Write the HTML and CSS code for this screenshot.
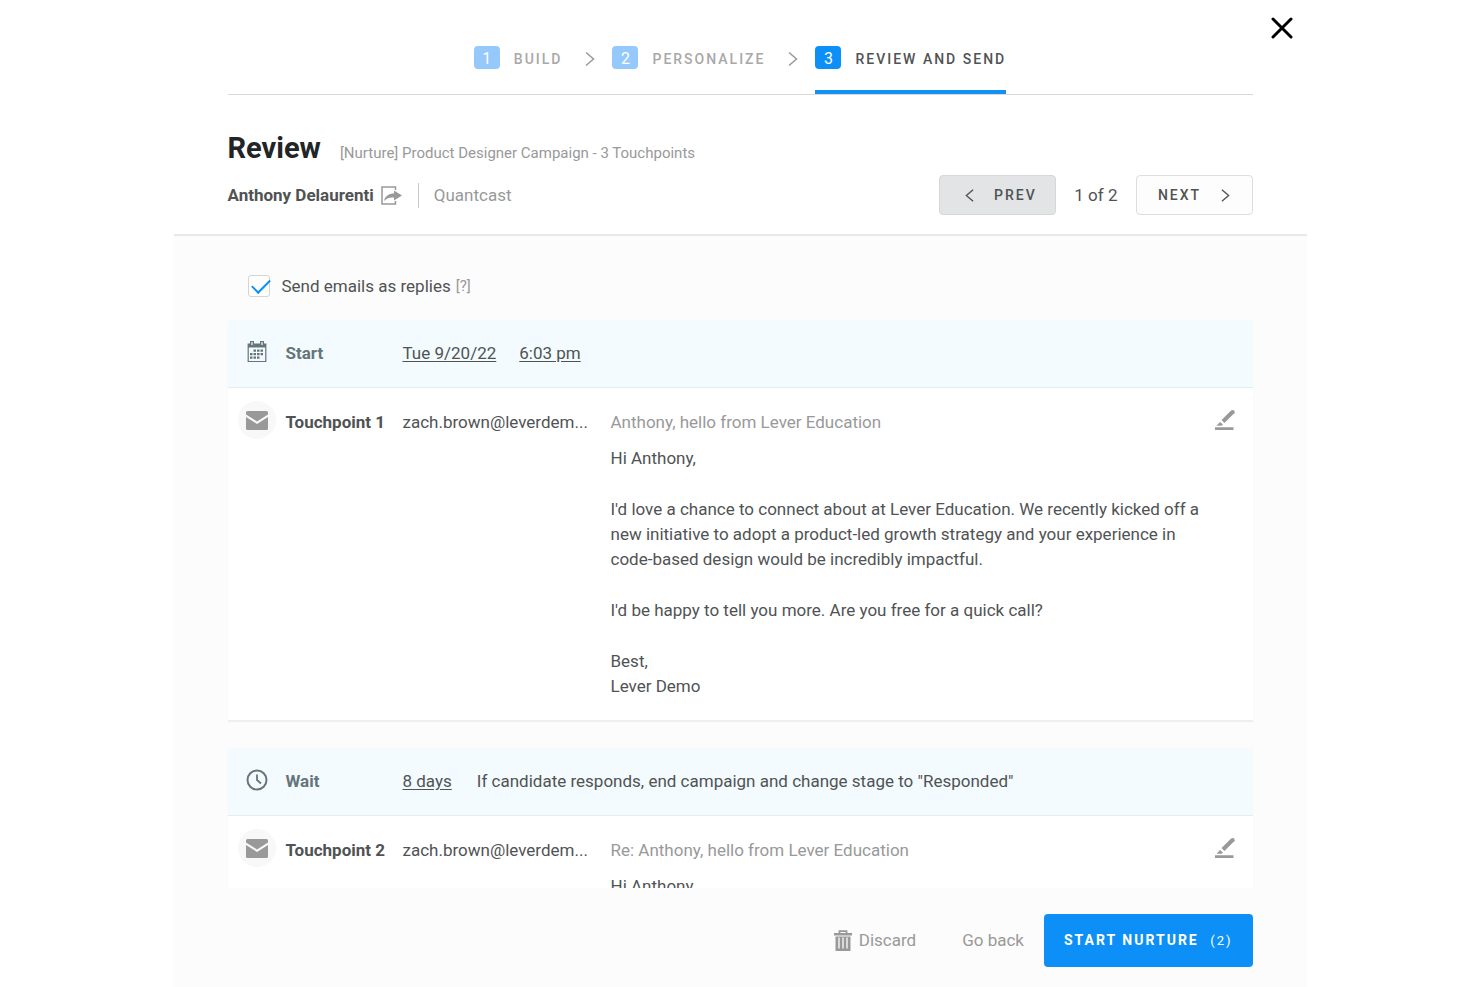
FILE: index.html
```html
<!DOCTYPE html>
<html lang="en">
<head>
<meta charset="utf-8">
<meta name="viewport" content="width=device-width, initial-scale=1">
<title>Review nurture campaign</title>
<link rel="stylesheet" href="styles.css">
</head>
<body>
<svg class="sprite" aria-hidden="true">
  <symbol id="chevron-right" viewBox="0 0 10 16"><path d="M1 1.5 8.5 8 1 14.5" fill="none" stroke="currentColor" stroke-width="1.5"/></symbol>
  <symbol id="chevron-left" viewBox="0 0 10 16"><path d="M9 1.5 1.5 8 9 14.5" fill="none" stroke="currentColor" stroke-width="1.5"/></symbol>
  <symbol id="mail" viewBox="0 0 22 19"><path d="M1.500 0h19Q22 0 22 1.500V3.500L11 10.500 0 3.500V1.500Q0 0 1.500 0ZM0 6 11 13 22 6V17.500Q22 19 20.500 19H1.500Q0 19 0 17.500Z" fill="currentColor"/></symbol>
  <symbol id="pencil" viewBox="0 0 20 20"><path d="m8 11.500 9-9" stroke="currentColor" stroke-width="4" fill="none"/><circle cx="17.600" cy="2.200" r="2.100" fill="currentColor"/><path d="M1.500 15.800 5 12 8 14.500 6.500 15.800ZM0 17.200h18.500v2.800H0Z" fill="currentColor"/></symbol>
</svg>
<main class="modal">
  <button class="close" type="button" aria-label="Close"><svg viewBox="0 0 22 22"><path d="m2 2 18 18M20 2 2 20" fill="none" stroke="currentColor" stroke-width="3" stroke-linecap="round"/></svg></button>
  <header class="header">
    <nav class="steps" aria-label="Progress">
      <a class="step" href="#build"><span class="step-number">1</span>BUILD</a>
      <svg class="step-arrow"><use href="#chevron-right"/></svg>
      <a class="step" href="#personalize"><span class="step-number">2</span>PERSONALIZE</a>
      <svg class="step-arrow"><use href="#chevron-right"/></svg>
      <a class="step step-active" href="#review" aria-current="step"><span class="step-number">3</span>REVIEW AND SEND</a>
    </nav>
    <div class="title-row">
      <h1 class="title">Review</h1>
      <span class="campaign">[Nurture] Product Designer Campaign - 3 Touchpoints</span>
    </div>
    <div class="candidate-row">
      <a class="candidate" href="#candidate">Anthony Delaurenti
        <svg class="share" viewBox="0 0 21 19"><path d="M14.500 4V1H1v17h13.500v-3" fill="none" stroke="currentColor" stroke-width="1.500"/><path d="M13 4.500 21 9.500 13 14.500V11.500C9 11 6 12 3 15 4 10 8 7.500 13 7.500Z" fill="currentColor"/></svg>
      </a>
      <span class="company">Quantcast</span>
      <div class="pager">
        <button class="pager-button prev" type="button"><svg class="chevron"><use href="#chevron-left"/></svg>PREV</button>
        <span>1 of 2</span>
        <button class="pager-button next" type="button">NEXT<svg class="chevron"><use href="#chevron-right"/></svg></button>
      </div>
    </div>
  </header>
  <div class="content">
    <div class="replies">
      <input class="checkbox" type="checkbox" id="replies" checked>
      <label for="replies">Send emails as replies</label>
      <span class="help">[?]</span>
    </div>
    <section class="group">
      <div class="timing">
        <svg class="timing-icon" viewBox="0 0 20 22"><path d="M1.200 3h17.600v17.500H1.200Z" fill="none" stroke="currentColor" stroke-width="1.200"/><path d="M1 3h18v3.500H1ZM3 0h4v5H3ZM13 0h4v5h-4Z" fill="currentColor"/><path d="M5 1v3M15 1v3" stroke="#f3fbfe" stroke-width="1.200"/><path d="M6.500 9.700H17M3 13.200H17M3 16.700h10.500" fill="none" stroke="currentColor" stroke-width="2.300" stroke-dasharray="2.500 1"/></svg>
        <h2 class="timing-label">Start</h2>
        <div class="timing-details"><a href="#date">Tue 9/20/22</a><a href="#time">6:03 pm</a></div>
      </div>
      <article class="touchpoint">
        <span class="badge"><svg class="mail"><use href="#mail"/></svg></span>
        <h3 class="name">Touchpoint 1</h3>
        <span class="sender">zach.brown@leverdem...</span>
        <div class="email">
          <div class="subject">Anthony, hello from Lever Education</div>
          <div class="message">
            <p>Hi Anthony,</p>
            <p>I'd love a chance to connect about at Lever Education. We recently kicked off a<br>new initiative to adopt a product-led growth strategy and your experience in<br>code-based design would be incredibly impactful.</p>
            <p>I'd be happy to tell you more. Are you free for a quick call?</p>
            <p>Best,<br>Lever Demo</p>
          </div>
        </div>
        <button class="edit" type="button" aria-label="Edit touchpoint 1"><svg><use href="#pencil"/></svg></button>
      </article>
    </section>
    <section class="group">
      <div class="timing">
        <svg class="timing-icon" viewBox="0 0 22 22"><circle cx="11" cy="11" r="9.500" fill="none" stroke="currentColor" stroke-width="2"/><path d="M11 5.500V11l4 3.500" fill="none" stroke="currentColor" stroke-width="1.800"/></svg>
        <h2 class="timing-label">Wait</h2>
        <div class="timing-details timing-wait"><a href="#delay">8 days</a><span>If candidate responds, end campaign and change stage to "Responded"</span></div>
      </div>
      <article class="touchpoint">
        <span class="badge"><svg class="mail"><use href="#mail"/></svg></span>
        <h3 class="name">Touchpoint 2</h3>
        <span class="sender">zach.brown@leverdem...</span>
        <div class="email">
          <div class="subject">Re: Anthony, hello from Lever Education</div>
          <div class="message"><p>Hi Anthony,</p></div>
        </div>
        <button class="edit" type="button" aria-label="Edit touchpoint 2"><svg><use href="#pencil"/></svg></button>
      </article>
    </section>
  </div>
  <footer class="footer">
    <button class="text-button" type="button"><svg class="trash" viewBox="0 0 18 21"><path d="M5.500 3V1.200h7V3" fill="none" stroke="currentColor" stroke-width="1.800"/><path d="M0 3h18v2.500H0ZM1.500 6.500h15V21h-15Z" fill="currentColor"/><path d="M5 7.500v11M9 7.500v11M13 7.500v11" stroke="#fcfcfc" stroke-width="1.300"/></svg>Discard</button>
    <button class="text-button" type="button">Go back</button>
    <button class="primary" type="button">START NURTURE <span class="count">(2)</span></button>
  </footer>
</main>
</body>
</html>
```
FILE: styles.css
```css
* { box-sizing: border-box; }
body {
  margin: 0;
  background: #fff;
  color: #505354;
  font: 17px/25px Roboto, "Noto Sans", sans-serif;
}
h1, h2, h3, p { margin: 0; }
h2, h3 { font-size: 17px; font-weight: 700; }
a { color: inherit; }
button { font: inherit; color: inherit; cursor: pointer; padding: 0; border: 0; background: none; }
svg { display: block; flex: none; }
.sprite { position: absolute; width: 0; height: 0; }

.modal {
  position: relative;
  display: flex;
  flex-direction: column;
  max-width: 1133px;
  height: 100vh;
  margin: 0 auto;
  background: #fcfcfc;
}
.close { position: absolute; top: 17px; right: 14px; color: #000; }
.close svg { width: 22px; height: 22px; }

.header { padding: 0 54px 19px; background: #fff; border-bottom: 2px solid #e8e8e8; }
.steps {
  display: flex;
  justify-content: center;
  height: 95px;
  border-bottom: 1px solid #d9d9d9;
}
.step {
  display: flex;
  align-items: center;
  gap: 14px;
  padding-top: 28px;
  border-bottom: 4px solid transparent;
  color: #a8a8a8;
  font-size: 14px;
  font-weight: 500;
  letter-spacing: 2px;
  text-decoration: none;
}
.step-number {
  width: 26px;
  height: 23px;
  margin-bottom: 4px;
  border-radius: 4px;
  background: #95c9fb;
  color: #fff;
  font-size: 16px;
  font-weight: 400;
  line-height: 25px;
  letter-spacing: 0;
  text-align: center;
}
.step-active { color: #505354; border-color: #1291f2; }
.step-active .step-number { background: #0c90f7; }
.step-arrow { width: 10px; height: 16px; margin: 51px 17px 0 23px; color: #999; }

.title-row { display: flex; align-items: baseline; gap: 19px; margin-top: 33px; }
.title { font-size: 29px; line-height: 40px; color: #222425; }
.campaign { font-size: 15px; color: #999; }
.candidate-row { display: flex; align-items: center; margin-top: 7px; }
.candidate { display: flex; align-items: center; gap: 7px; font-weight: 700; text-decoration: none; }
.share { width: 21px; height: 19px; color: #999; }
.company { margin-left: 16px; padding-left: 15px; border-left: 1px solid #ccc; color: #999; }
.pager { display: flex; align-items: center; gap: 18px; margin-left: auto; }
.pager-button {
  display: flex;
  align-items: center;
  justify-content: center;
  gap: 20px;
  width: 117px;
  height: 40px;
  border: 1px solid #dcdddd;
  border-radius: 4px;
  font-size: 14px;
  font-weight: 500;
  letter-spacing: 2px;
}
.prev { padding-left: 6px; background: #e2e4e5; border-color: #d6d8d8; }
.next { background: #fdfdfd; }
.chevron { width: 9px; height: 15px; }

.content { flex: 1; min-height: 0; padding: 35px 54px 0; overflow-y: auto; scrollbar-width: none; }
.replies { display: flex; align-items: center; height: 30px; margin: 0 20px 19px; }
.checkbox {
  appearance: none;
  width: 22px;
  height: 22px;
  margin: 0 12px 0 0;
  border: 1px solid #d5d5d5;
  border-radius: 3px;
  background: #fff;
}
.checkbox:checked::before {
  content: "";
  display: block;
  width: 16px;
  height: 8px;
  margin: 3px 0 0 3px;
  border: solid #0c90f7;
  border-width: 0 0 2px 2px;
  transform: rotate(-45deg);
}
.help { margin-left: 5px; font-size: 15px; color: #999; }

.group { margin-bottom: 28px; background: #fff; box-shadow: 0 2px 1px #eeefef; }
.timing, .touchpoint { display: grid; grid-template-columns: 38px 107px 198px 1fr 20px; column-gap: 10px; padding: 0 18px 0 10px; }
.timing { align-items: center; height: 68px; background: #f3fbfe; border-bottom: 1px solid #e2eef3; }
.timing-icon { width: 22px; height: 22px; margin: 0 auto 4px; color: #66757b; }
.timing-label { color: #66757b; }
.timing-details { grid-column: 3 / 6; display: flex; gap: 23px; }
.timing-wait { gap: 25px; }
.timing a { text-underline-offset: 2px; }
.touchpoint { padding-top: 13px; padding-bottom: 21px; }
.badge { display: grid; place-items: center; width: 38px; height: 38px; border-radius: 50%; background: #f8f8f8; }
.mail { width: 22px; height: 19px; color: #999; }
.name, .sender, .subject { line-height: 42px; white-space: nowrap; }
.subject { color: #999; }
.message { display: grid; gap: 26px; margin-top: 3px; }
.edit { align-self: start; padding-top: 9px; color: #999; }
.edit svg { width: 20px; height: 20px; }

.footer { display: flex; align-items: center; justify-content: flex-end; padding: 26px 54px 20px; }
.text-button { display: flex; align-items: center; gap: 7px; margin-right: 46px; color: #999; }
.text-button + .text-button { margin-right: 20px; }
.trash { width: 18px; height: 21px; }
.primary {
  height: 53px;
  padding: 0 20px;
  border-radius: 4px;
  background: #0c90f7;
  color: #fff;
  font-size: 14px;
  font-weight: 700;
  letter-spacing: 2px;
}
.count { margin-left: 6px; font-size: 13px; font-weight: 400; }
```
